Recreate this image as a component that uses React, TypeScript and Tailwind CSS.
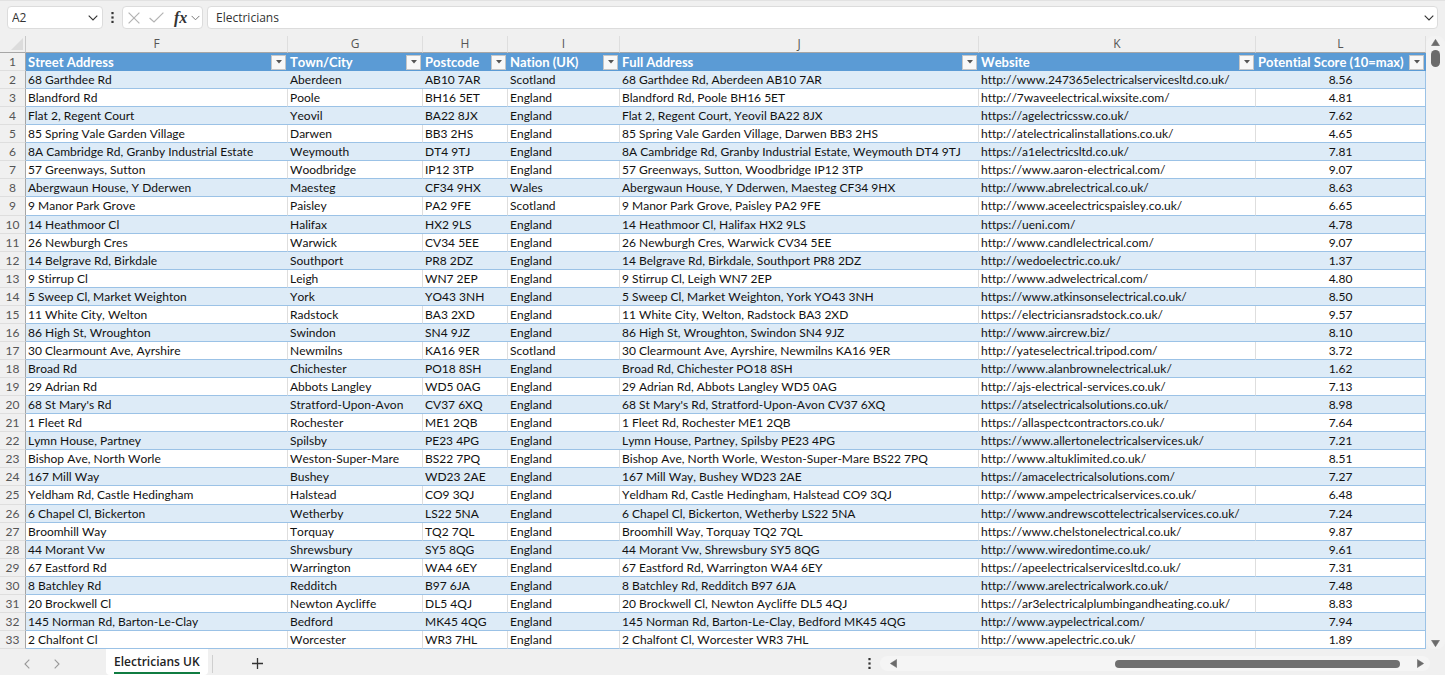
const columns = [
  { letter: "F", title: "Street Address" },
  { letter: "G", title: "Town/City" },
  { letter: "H", title: "Postcode" },
  { letter: "I", title: "Nation (UK)" },
  { letter: "J", title: "Full Address" },
  { letter: "K", title: "Website" },
  { letter: "L", title: "Potential Score (10=max)" },
];

// street, town, postcode, nation, website, score
const rows = [
  ["68 Garthdee Rd", "Aberdeen", "AB10 7AR", "Scotland", "http://www.247365electricalservicesltd.co.uk/", "8.56"],
  ["Blandford Rd", "Poole", "BH16 5ET", "England", "http://7waveelectrical.wixsite.com/", "4.81"],
  ["Flat 2, Regent Court", "Yeovil", "BA22 8JX", "England", "https://agelectricssw.co.uk/", "7.62"],
  ["85 Spring Vale Garden Village", "Darwen", "BB3 2HS", "England", "http://atelectricalinstallations.co.uk/", "4.65"],
  ["8A Cambridge Rd, Granby Industrial Estate", "Weymouth", "DT4 9TJ", "England", "https://a1electricsltd.co.uk/", "7.81"],
  ["57 Greenways, Sutton", "Woodbridge", "IP12 3TP", "England", "https://www.aaron-electrical.com/", "9.07"],
  ["Abergwaun House, Y Dderwen", "Maesteg", "CF34 9HX", "Wales", "http://www.abrelectrical.co.uk/", "8.63"],
  ["9 Manor Park Grove", "Paisley", "PA2 9FE", "Scotland", "http://www.aceelectricspaisley.co.uk/", "6.65"],
  ["14 Heathmoor Cl", "Halifax", "HX2 9LS", "England", "https://ueni.com/", "4.78"],
  ["26 Newburgh Cres", "Warwick", "CV34 5EE", "England", "http://www.candlelectrical.com/", "9.07"],
  ["14 Belgrave Rd, Birkdale", "Southport", "PR8 2DZ", "England", "http://wedoelectric.co.uk/", "1.37"],
  ["9 Stirrup Cl", "Leigh", "WN7 2EP", "England", "http://www.adwelectrical.com/", "4.80"],
  ["5 Sweep Cl, Market Weighton", "York", "YO43 3NH", "England", "https://www.atkinsonselectrical.co.uk/", "8.50"],
  ["11 White City, Welton", "Radstock", "BA3 2XD", "England", "https://electriciansradstock.co.uk/", "9.57"],
  ["86 High St, Wroughton", "Swindon", "SN4 9JZ", "England", "http://www.aircrew.biz/", "8.10"],
  ["30 Clearmount Ave, Ayrshire", "Newmilns", "KA16 9ER", "Scotland", "http://yateselectrical.tripod.com/", "3.72"],
  ["Broad Rd", "Chichester", "PO18 8SH", "England", "http://www.alanbrownelectrical.uk/", "1.62"],
  ["29 Adrian Rd", "Abbots Langley", "WD5 0AG", "England", "http://ajs-electrical-services.co.uk/", "7.13"],
  ["68 St Mary's Rd", "Stratford-Upon-Avon", "CV37 6XQ", "England", "https://atselectricalsolutions.co.uk/", "8.98"],
  ["1 Fleet Rd", "Rochester", "ME1 2QB", "England", "https://allaspectcontractors.co.uk/", "7.64"],
  ["Lymn House, Partney", "Spilsby", "PE23 4PG", "England", "https://www.allertonelectricalservices.uk/", "7.21"],
  ["Bishop Ave, North Worle", "Weston-Super-Mare", "BS22 7PQ", "England", "http://www.altuklimited.co.uk/", "8.51"],
  ["167 Mill Way", "Bushey", "WD23 2AE", "England", "https://amacelectricalsolutions.com/", "7.27"],
  ["Yeldham Rd, Castle Hedingham", "Halstead", "CO9 3QJ", "England", "http://www.ampelectricalservices.co.uk/", "6.48"],
  ["6 Chapel Cl, Bickerton", "Wetherby", "LS22 5NA", "England", "http://www.andrewscottelectricalservices.co.uk/", "7.24"],
  ["Broomhill Way", "Torquay", "TQ2 7QL", "England", "https://www.chelstonelectrical.co.uk/", "9.87"],
  ["44 Morant Vw", "Shrewsbury", "SY5 8QG", "England", "http://www.wiredontime.co.uk/", "9.61"],
  ["67 Eastford Rd", "Warrington", "WA4 6EY", "England", "https://apeelectricalservicesltd.co.uk/", "7.31"],
  ["8 Batchley Rd", "Redditch", "B97 6JA", "England", "http://www.arelectricalwork.co.uk/", "7.48"],
  ["20 Brockwell Cl", "Newton Aycliffe", "DL5 4QJ", "England", "https://ar3electricalplumbingandheating.co.uk/", "8.83"],
  ["145 Norman Rd, Barton-Le-Clay", "Bedford", "MK45 4QG", "England", "http://www.aypelectrical.com/", "7.94"],
  ["2 Chalfont Cl", "Worcester", "WR3 7HL", "England", "http://www.apelectric.co.uk/", "1.89"],
];

const Chevron = ({ className = "" }: { className?: string }) => (
  <svg viewBox="0 0 10 6" className={className} fill="none" stroke="currentColor" strokeWidth="1.1">
    <path d="M0.7 0.7 L5 5 L9.3 0.7" />
  </svg>
);

const Triangle = ({ className = "" }: { className?: string }) => (
  <svg viewBox="0 0 10 8" className={className} fill="currentColor">
    <path d="M5 0.4 L9.6 7.6 H0.4 Z" stroke="currentColor" strokeWidth="0.6" strokeLinejoin="round" />
  </svg>
);

const Dots = () => (
  <svg viewBox="0 0 3 11" className="h-[11px] w-[3px] shrink-0" fill="#333333">
    <rect x="0.4" y="0" width="2.2" height="2.2" />
    <rect x="0.4" y="4.4" width="2.2" height="2.2" />
    <rect x="0.4" y="8.8" width="2.2" height="2.2" />
  </svg>
);

const FormulaBar = () => {
  return (
    <div className="flex h-9 shrink-0 items-start border-t border-[#e2e2e2] px-[7px] pt-[5px] text-xs text-[#333333]">
      <div className="flex h-[23px] w-24 items-center rounded border border-[#dcdcdc] bg-white pl-1 pr-1">
        <input
          aria-label="Name box"
          defaultValue="A2"
          className="w-full min-w-0 bg-transparent outline-none"
        />
        <button aria-label="Open name list" className="shrink-0">
          <Chevron className="h-[6px] w-[10px]" />
        </button>
      </div>
      <div className="flex h-[23px] w-[19px] items-center justify-center">
        <Dots />
      </div>
      <div className="flex h-[23px] w-[81px] items-center rounded border border-[#dcdcdc] bg-white pl-[5px]">
        <button aria-label="Cancel">
          <svg viewBox="0 0 12 12" className="h-3 w-3" fill="none" stroke="#b3b3b3" strokeWidth="1.2">
            <path d="M0.6 0.6 L11.4 11.4 M11.4 0.6 L0.6 11.4" />
          </svg>
        </button>
        <button aria-label="Enter" className="ml-[9px]">
          <svg viewBox="0 0 15 11" className="h-[11px] w-[15px]" fill="none" stroke="#b3b3b3" strokeWidth="1.2">
            <path d="M0.6 6 L5 10 L14.4 0.6" />
          </svg>
        </button>
        <button
          aria-label="Insert function"
          className="ml-[10px] flex items-center font-['Liberation_Serif',serif] text-base font-bold italic leading-none"
        >
          fx
        </button>
        <button aria-label="More functions" className="ml-1 text-[#777777]">
          <Chevron className="h-[6px] w-[9px]" />
        </button>
      </div>
      <div className="ml-1 flex h-[23px] min-w-0 flex-1 items-center rounded border border-[#dcdcdc] bg-white pl-2 pr-[3px]">
        <input
          aria-label="Formula bar"
          defaultValue="Electricians"
          className="w-full min-w-0 bg-transparent outline-none"
        />
        <button aria-label="Expand formula bar" className="shrink-0">
          <Chevron className="h-[6px] w-[10px]" />
        </button>
      </div>
    </div>
  );
};

const Sheet = () => {
  return (
    <table className="h-full w-full table-fixed border-separate border-spacing-0 whitespace-nowrap font-[Lato,Carlito,sans-serif] text-xs leading-4 text-[#111111] [font-kerning:none] [font-variant-ligatures:none]">
      <colgroup>
        <col className="w-[26px]" />
        <col className="w-[262px]" />
        <col className="w-[135px]" />
        <col className="w-[85px]" />
        <col className="w-[112px]" />
        <col className="w-[359px]" />
        <col className="w-[277px]" />
        <col className="w-[170px]" />
      </colgroup>
      <thead>
        <tr className="h-[17px] text-[#555555]">
          <th className="border-b border-r border-b-[#a6a6a6] border-r-[#c8c8c8] p-0">
            <button aria-label="Select all" className="ml-auto mr-[2px] block">
              <svg viewBox="0 0 12 12" className="h-3 w-3" fill="#dcdcdc">
                <path d="M12 0 V12 H0 Z" />
              </svg>
            </button>
          </th>
          {columns.map((c) => (
            <th
              key={c.letter}
              className="border-b border-r border-b-[#a6a6a6] border-r-[#dedede] p-0 text-center font-['Open_Sans',sans-serif] font-normal"
            >
              {c.letter}
            </th>
          ))}
        </tr>
        <tr className="h-[18px]">
          <th className="border-b border-r border-b-[#dedede] border-r-[#a6a6a6] p-0 text-center font-normal text-[#555555]">
            1
          </th>
          {columns.map((c) => (
            <th key={c.letter} className="bg-[#5b9bd5] p-0 text-left text-white">
              <div className="flex h-[18px] items-center justify-between px-[2px] text-[13px]">
                <span>{c.title}</span>
                <button
                  aria-label={`Filter ${c.title}`}
                  className="flex h-[15px] w-[15px] shrink-0 items-center justify-center border border-[#c6c6c6] bg-[#f8f8f8] text-[#555555]"
                >
                  <svg viewBox="0 0 6 4" className="h-1 w-[6px]" fill="currentColor">
                    <path d="M0 0 H6 L3 3.6 Z" />
                  </svg>
                </button>
              </div>
            </th>
          ))}
        </tr>
      </thead>
      <tbody>
        {rows.map(([street, town, postcode, nation, website, score], index) => {
          const cell =
            index % 2 == 0
              ? "border-b border-b-[#9bc2e6] bg-[#ddebf7] pb-0 pl-[2px] pr-0 pt-px"
              : "border-b border-r border-b-[#9bc2e6] border-r-[#dedede] bg-white pb-0 pl-[2px] pr-0 pt-px";
          return (
            <tr key={index} className="h-[18px]">
              <th className="border-b border-r border-b-[#dedede] border-r-[#a6a6a6] px-0 pb-0 pt-px text-center font-normal text-[#555555]">
                {index + 2}
              </th>
              <td className={cell}>{street}</td>
              <td className={cell}>{town}</td>
              <td className={cell}>{postcode}</td>
              <td className={cell}>{nation}</td>
              <td className={cell}>{`${street}, ${town} ${postcode}`}</td>
              <td className={cell}>{website}</td>
              <td
                className={`border-b border-r border-[#9bc2e6] px-0 pb-0 pt-px text-center ${
                  index % 2 == 0 ? "bg-[#ddebf7]" : "bg-white"
                }`}
              >
                {score}
              </td>
            </tr>
          );
        })}
      </tbody>
    </table>
  );
};

const VerticalScroll = () => {
  return (
    <div className="flex w-[19px] shrink-0 flex-col items-center justify-between rounded-lg bg-[#f3f3f3] pb-[2px] pt-[3px] text-[#6b6b6b]">
      <div className="flex flex-col items-center gap-1">
        <button aria-label="Scroll up">
          <Triangle className="h-[7px] w-[9px]" />
        </button>
        <div className="h-[17px] w-[9px] rounded-full bg-[#6b6b6b]" />
      </div>
      <button aria-label="Scroll down">
        <Triangle className="h-[7px] w-[9px] rotate-180" />
      </button>
    </div>
  );
};

const TabBar = () => {
  return (
    <div className="flex h-[26px] shrink-0 items-stretch pr-[15px]">
      <div className="flex w-[106px] shrink-0 items-center pl-3 pt-[3px] text-[#9a9a9a]">
        <button aria-label="Previous sheet" className="flex w-[30px] justify-center">
          <Chevron className="h-[6px] w-[10px] rotate-90" />
        </button>
        <button aria-label="Next sheet" className="flex w-[30px] justify-center">
          <Chevron className="h-[6px] w-[10px] -rotate-90" />
        </button>
      </div>
      <button className="flex shrink-0 flex-col items-center rounded-b bg-white px-2 pt-1 text-xs font-semibold text-[#222222]">
        <span className="border-b-2 border-[#107c41] pb-px leading-[18px]">Electricians UK</span>
      </button>
      <div className="flex flex-1 items-center pt-[3px]">
        <div className="ml-1 h-[18px] w-px bg-[#cfcfcf]" />
        <button aria-label="New sheet" className="ml-[39px]">
          <svg viewBox="0 0 11 11" className="h-[11px] w-[11px]" stroke="#333333" strokeWidth="1.3">
            <path d="M5.5 0 V11 M0 5.5 H11" />
          </svg>
        </button>
        <div className="flex flex-1 justify-end pr-[9px]">
          <Dots />
        </div>
        <div className="flex h-[15px] w-[550px] items-center rounded-full bg-[#f5f5f5] px-[9px] text-[#6b6b6b]">
          <button aria-label="Scroll left">
            <Triangle className="h-[7px] w-[9px] -rotate-90" />
          </button>
          <div className="flex flex-1 justify-end pr-4">
            <div className="h-2 w-[285px] rounded-full bg-[#6f6f6f]" />
          </div>
          <button aria-label="Scroll right" className="-mr-1">
            <Triangle className="h-[7px] w-[9px] rotate-90" />
          </button>
        </div>
      </div>
    </div>
  );
};

const App = () => {
  return (
    <div className="flex h-screen flex-col bg-[#f0f0f0] font-['Open_Sans',sans-serif]">
      <FormulaBar />
      <div className="flex min-h-0 flex-1">
        <div className="h-full min-w-0 flex-1 overflow-hidden">
          <Sheet />
        </div>
        <VerticalScroll />
      </div>
      <TabBar />
    </div>
  );
};

export default App;
